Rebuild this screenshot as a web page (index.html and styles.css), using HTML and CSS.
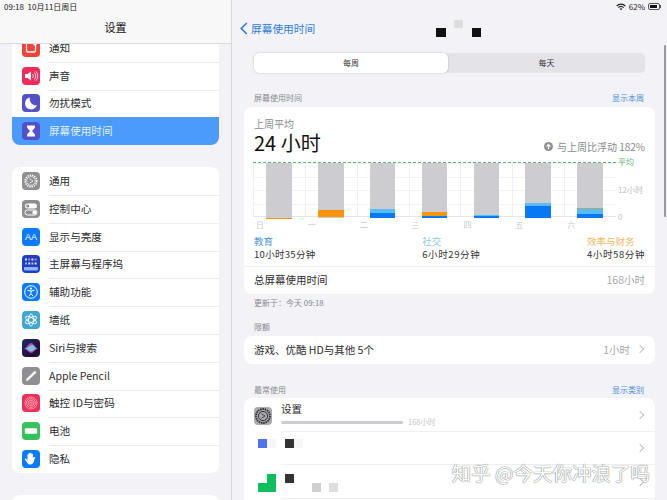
FILE: index.html
```html
<!doctype html>
<html lang="zh-CN">
  <head>
    <meta charset="UTF-8" />
    <meta name="viewport" content="width=device-width, initial-scale=1.0" />
    <title>屏幕使用时间</title>
    <link rel="stylesheet" href="styles.css">
  </head>
  <body>
    <aside class="sidebar">
      <header class="side-head">
        <div class="side-status">09:18&nbsp;&nbsp;10月11日周日</div>
        <div class="side-title">设置</div>
      </header>
      <div class="side-list">
        <div class="group group-first">
          <div class="row">
            <span class="icon red"><svg viewBox="0 0 18 18"><rect x="4.5" y="4" width="9" height="9" rx="1.5" fill="none" stroke="#fff" stroke-width="1.3"/><circle cx="13" cy="4.5" r="2" fill="#fff"/></svg></span>
            <span class="label">通知</span>
          </div>
          <div class="row">
            <span class="icon pink"><svg viewBox="0 0 18 18"><path d="M3 7h2.500L9 4.500v9L5.500 11H3z" fill="#fff"/><path d="M10.500 7a3 3 0 0 1 0 4M12.300 5.500a5 5 0 0 1 0 7M14 4.500a6.500 6.500 0 0 1 0 9" fill="none" stroke="#fff" stroke-width=".8"/></svg></span>
            <span class="label">声音</span>
          </div>
          <div class="row">
            <span class="icon indigo"><svg viewBox="0 0 18 18"><path d="M8 3.500a6 6 0 1 0 6.800 7.800A6.200 6.200 0 0 1 8 3.500z" fill="#fff"/></svg></span>
            <span class="label">勿扰模式</span>
          </div>
          <div class="row selected">
            <span class="icon indigo"><svg viewBox="0 0 18 18"><path d="M5 3.500h8v1.200c0 2-2.500 3-2.800 4.300.3 1.300 2.800 2.300 2.800 4.300v1.200H5v-1.200c0-2 2.500-3 2.800-4.300C7.500 7.700 5 6.700 5 4.700z" fill="#fff"/></svg></span>
            <span class="label">屏幕使用时间</span>
          </div>
        </div>
        <div class="group">
          <div class="row">
            <span class="icon gray"><svg viewBox="0 0 18 18"><circle cx="9" cy="9" r="5.800" fill="none" stroke="#fff" stroke-width="1.500" stroke-dasharray="1.400 .9"/><circle cx="9" cy="9" r="4.300" fill="none" stroke="#fff" stroke-width=".7"/><path d="M7.500 6.800 11 9l-3.500 2.200" fill="none" stroke="#fff" stroke-width=".7"/></svg></span>
            <span class="label">通用</span>
          </div>
          <div class="row">
            <span class="icon gray"><svg viewBox="0 0 18 18"><rect x="3" y="3.500" width="12" height="5" rx="2.500" fill="#fff"/><circle cx="5.700" cy="6" r="1.600" fill="#8e8e93"/><rect x="3" y="10" width="12" height="5" rx="2.500" fill="none" stroke="#fff"/><circle cx="12.300" cy="12.500" r="2" fill="#fff"/></svg></span>
            <span class="label">控制中心</span>
          </div>
          <div class="row">
            <span class="icon blue"><span class="aa">AA</span></span>
            <span class="label">显示与亮度</span>
          </div>
          <div class="row">
            <span class="icon navy"><svg viewBox="0 0 18 18" fill="#fff"><g opacity=".85"><rect x="3" y="3.500" width="2" height="2"/><rect x="6.200" y="3.500" width="2" height="2" fill="#f08ab0"/><rect x="9.400" y="3.500" width="2" height="2"/><rect x="12.600" y="3.500" width="2" height="2" fill="#f08ab0"/><rect x="3" y="7.500" width="2" height="2" fill="#8fd0f5"/><rect x="6.200" y="7.500" width="2" height="2"/><rect x="9.400" y="7.500" width="2" height="2" fill="#f5d98f"/><rect x="12.600" y="7.500" width="2" height="2"/></g><rect x="2" y="12" width="14" height="3.500" rx="1" fill="#8fb4f5"/></svg></span>
            <span class="label">主屏幕与程序坞</span>
          </div>
          <div class="row">
            <span class="icon blue"><svg viewBox="0 0 18 18"><circle cx="9" cy="9" r="6.300" fill="none" stroke="#fff" stroke-width="1"/><circle cx="9" cy="5.600" r="1.100" fill="#fff"/><path d="M5.500 7.300 9 8l3.500-.7M9 8v2.500M7 13.200l2-2.700 2 2.700" fill="none" stroke="#fff" stroke-width="1"/></svg></span>
            <span class="label">辅助功能</span>
          </div>
          <div class="row">
            <span class="icon teal"><svg viewBox="0 0 18 18" fill="none" stroke="#fff" stroke-width=".9"><ellipse cx="9" cy="9" rx="2.500" ry="6"/><ellipse cx="9" cy="9" rx="2.500" ry="6" transform="rotate(60 9 9)"/><ellipse cx="9" cy="9" rx="2.500" ry="6" transform="rotate(120 9 9)"/></svg></span>
            <span class="label">墙纸</span>
          </div>
          <div class="row">
            <span class="icon siri"><svg viewBox="0 0 18 18"><path d="M2 9.500C5 9 6.500 4 9 4s4 5 7 5.500C13 10.500 11 14 9 14s-4-3.500-7-4.500z" fill="#e25bd0" opacity=".75"/><path d="M4 9.500C6 8 8 6.500 10 6s3 3 4.500 3.500C12 11 10.500 12.500 9 12.500S6 11 4 9.500z" fill="#6fe0f2" opacity=".8"/></svg></span>
            <span class="label">Siri与搜索</span>
          </div>
          <div class="row">
            <span class="icon gray"><svg viewBox="0 0 18 18"><path d="M4 14l.5-2.200L12.800 3.700l1.700 1.700-8.300 8.100z" fill="#fff"/></svg></span>
            <span class="label">Apple Pencil</span>
          </div>
          <div class="row">
            <span class="icon rose"><svg viewBox="0 0 18 18" fill="none" stroke="#f7b4c2" stroke-width=".8"><circle cx="9" cy="9" r="6"/><circle cx="9" cy="9" r="4.400"/><circle cx="9" cy="9" r="2.800"/><circle cx="9" cy="9" r="1.200"/></svg></span>
            <span class="label">触控 ID与密码</span>
          </div>
          <div class="row">
            <span class="icon green"><svg viewBox="0 0 18 18"><rect x="2.800" y="6.300" width="12.400" height="5.400" rx="1" fill="#fff"/></svg></span>
            <span class="label">电池</span>
          </div>
          <div class="row">
            <span class="icon blue"><svg viewBox="0 0 18 18"><path d="M5.500 7.500V4.800c0-1 1.300-1 1.300 0V3.600c0-1 1.400-1 1.400 0v-.2c0-1 1.400-1 1.400 0v1c0-1 1.300-1 1.300 0v3.800c.3-1 1.900-1.600 2.400-.6-.8 1.200-1 2.300-1.400 3.900-.5 2-1.800 3-3.500 3-1.800 0-2.900-.9-3.600-2.600L3 9.800c-.5-1 .7-1.700 1.300-.8l1.200 1.500z" fill="#fff"/></svg></span>
            <span class="label">隐私</span>
          </div>
        </div>
        <div class="group">
          <div class="row">
            <span class="icon teal"></span>
            <span class="label"></span>
          </div>
        </div>
      </div>
    </aside>

    <main class="main">
      <div class="main-status">
        <svg class="wifi" viewBox="0 0 12 9"><path d="M6 8.500 4.300 6.700a2.500 2.500 0 0 1 3.400 0zM3.400 5.800 2.300 4.700a5.300 5.300 0 0 1 7.400 0L8.600 5.800a3.800 3.800 0 0 0-5.200 0zM1.400 3.800.3 2.700a8.100 8.100 0 0 1 11.400 0l-1.100 1.100a6.600 6.600 0 0 0-9.200 0z" fill="#222"/></svg>
        <span>62%</span>
        <span class="battery"><span class="battery-fill"></span></span>
      </div>
      <nav class="nav">
        <svg class="back" viewBox="0 0 8 13"><path d="M6.800 1 1.300 6.500l5.500 5.500" fill="none" stroke="#2f80d8" stroke-width="1.700"/></svg>
        <span>屏幕使用时间</span>
      </nav>

      <div class="segments">
        <div class="segment active">每周</div>
        <div class="segment">每天</div>
      </div>

      <div class="section-head first-head">
        <span>屏幕使用时间</span>
        <span class="link">显示本周</span>
      </div>
      <section class="card">
        <div class="summary">
          <div class="summary-label">上周平均</div>
          <div class="summary-line">
            <span class="big">24 小时</span>
            <span class="delta">
              <svg class="delta-icon" viewBox="0 0 10 10"><circle cx="5" cy="5" r="5" fill="#8e8e93"/><path d="M5 8V3M2.900 5 5 2.700 7.100 5" fill="none" stroke="#fff" stroke-width="1.300"/></svg>
              与上周比浮动 182%
            </span>
          </div>
        </div>
        <div class="chart-wrap">
          <div class="chart">
            <div class="col"><div class="bar"><i class="gray-seg" style="height:54.500px"></i><i class="orange" style="height:.5px"></i></div></div>
            <div class="col"><div class="bar"><i class="gray-seg" style="height:47px"></i><i class="orange" style="height:7px"></i><i class="gray-seg" style="height:1px"></i></div></div>
            <div class="col"><div class="bar"><i class="gray-seg" style="height:46px"></i><i class="sky" style="height:4px"></i><i class="blue-seg" style="height:5px"></i></div></div>
            <div class="col"><div class="bar"><i class="gray-seg" style="height:49px"></i><i class="orange" style="height:4px"></i><i class="blue-seg" style="height:2px"></i></div></div>
            <div class="col"><div class="bar"><i class="gray-seg" style="height:52px"></i><i class="sky" style="height:1px"></i><i class="blue-seg" style="height:2px"></i></div></div>
            <div class="col"><div class="bar"><i class="gray-seg" style="height:40px"></i><i class="sky" style="height:3px"></i><i class="blue-seg" style="height:12px"></i></div></div>
            <div class="col"><div class="bar"><i class="gray-seg" style="height:44.500px"></i><i class="olive" style="height:1px"></i><i class="sky" style="height:5.500px"></i><i class="blue-seg" style="height:4px"></i></div></div>
          </div>
          <div class="axis">
            <span class="axis-avg">平均</span>
            <span>12小时</span>
            <span>0</span>
          </div>
        </div>
        <div class="days">
          <span>日</span><span>一</span><span>二</span><span>三</span><span>四</span><span>五</span><span>六</span>
        </div>
        <div class="cats">
          <div>
            <div class="cat-name c-blue">教育</div>
            <div class="cat-value">10小时35分钟</div>
          </div>
          <div>
            <div class="cat-name c-sky">社交</div>
            <div class="cat-value wide">6小时29分钟</div>
          </div>
          <div>
            <div class="cat-name c-orange">效率与财务</div>
            <div class="cat-value wide">4小时58分钟</div>
          </div>
        </div>
        <div class="total">
          <span>总屏幕使用时间</span>
          <span class="muted">168小时</span>
        </div>
      </section>
      <div class="foot-note">更新于：今天 09:18</div>

      <div class="section-head limit-head"><span>限额</span></div>
      <section class="card limit">
        <span>游戏、优酷 HD与其他 5个</span>
        <span class="muted">1小时<i class="chev"></i></span>
      </section>

      <div class="section-head used-head">
        <span>最常使用</span>
        <span class="link">显示类别</span>
      </div>
      <section class="card apps">
        <div class="app">
          <span class="app-icon"><svg viewBox="0 0 18 18"><circle cx="9" cy="9" r="7" fill="none" stroke="#2c2c2e" stroke-width="1.800" stroke-dasharray="1.500 .8"/><circle cx="9" cy="9" r="4.600" fill="none" stroke="#2c2c2e" stroke-width="1"/><path d="M7.500 6.800 11 9l-3.500 2.200" fill="none" stroke="#2c2c2e" stroke-width=".8"/></svg></span>
          <div class="app-body">
            <div class="app-name">设置</div>
            <div class="app-usage"><span class="usage-bar"></span><span class="usage-text">168小时</span></div>
          </div>
          <i class="chev"></i>
        </div>
        <div class="app">
          <span class="app-icon"></span>
          <div class="app-body"></div>
          <i class="chev"></i>
          <b class="px px-blue"></b><b class="px px-faint1"></b><b class="px px-dark1"></b><b class="px px-faint2"></b>
        </div>
        <div class="app">
          <span class="app-icon"></span>
          <div class="app-body"></div>
          <i class="chev"></i>
          <b class="px px-green1"></b><b class="px px-green2"></b><b class="px px-dark2"></b><b class="px px-g1"></b><b class="px px-g2"></b>
        </div>
      </section>

      <b class="px top-a"></b><b class="px top-b"></b><b class="px top-c"></b>
      <div class="scrollbar"></div>
      <div class="watermark">知乎 @今天你冲浪了吗</div>
    </main>
  </body>
</html>
```

FILE: styles.css
```css
* {
  box-sizing: border-box;
}
body {
  margin: 0;
  width: 667px;
  height: 500px;
  overflow: hidden;
  display: flex;
  background: #f2f2f7;
  color: #1c1c1e;
  font-family: "Noto Sans CJK SC", "Liberation Sans", sans-serif;
}

/* left column */
.sidebar {
  width: 232px;
  height: 500px;
  display: flex;
  flex-direction: column;
  border-right: 1px solid #d8d8dc;
  background: #f2f2f7;
}
.side-head {
  height: 44px;
  flex: none;
  background: #f8f8f9;
  border-bottom: 1px solid #dcdcdf;
}
.side-status {
  height: 13px;
  padding-left: 4px;
  font-size: 8px;
  line-height: 13px;
  color: #222;
}
.side-title {
  height: 30px;
  text-align: center;
  font-size: 11px;
  line-height: 28px;
  color: #111;
}
.side-list {
  flex: 1;
  overflow: hidden;
  padding: 0 12px;
}
.group {
  background: #fff;
  border-radius: 8px;
  overflow: hidden;
  margin-bottom: 22px;
}
.group-first {
  margin-top: -10px;
}
.row {
  height: 27.800px;
  display: flex;
  align-items: center;
  padding-left: 10px;
}
.label {
  flex: 1;
  align-self: stretch;
  display: flex;
  align-items: center;
  margin-left: 9px;
  padding-bottom: 2px;
  font-size: 10.600px;
  color: #2c2c2e;
}
.group-first .row:first-child .label {
  padding-bottom: 0;
}
.row + .row .label {
  border-top: 1px solid #ececef;
}
.row.selected {
  background: #4a9bfb;
}
.row.selected .label {
  color: #e4f0ff;
  border-top: none;
}
.icon {
  width: 18px;
  height: 18px;
  flex: none;
  border-radius: 4px;
  display: flex;
  align-items: center;
  justify-content: center;
  overflow: hidden;
}
.icon svg {
  width: 18px;
  height: 18px;
}
.red { background: #f0443a; }
.pink { background: #ee2c5c; }
.indigo { background: #5350c8; }
.gray { background: #8e8e93; }
.blue { background: #0a7aff; }
.navy { background: #1c3fc4; }
.teal { background: #40a8d0; }
.siri { background: linear-gradient(135deg, #1b2a6b, #241038 70%, #0e1a40); }
.rose { background: #ee3058; }
.green { background: #36c15a; }
.aa {
  font-size: 9px;
  color: #fff;
  font-family: "Liberation Sans", sans-serif;
}

/* right column */
.main {
  position: relative;
  width: 435px;
  height: 500px;
  overflow: hidden;
  padding: 0 12px;
}
.main-status {
  height: 13px;
  display: flex;
  align-items: center;
  justify-content: flex-end;
  gap: 3px;
  margin-right: -7px;
  font-size: 8px;
  color: #222;
}
.wifi {
  width: 10px;
  height: 8px;
}
.battery {
  position: relative;
  width: 12px;
  height: 7px;
  margin-right: 2px;
  padding: 1px;
  border: 1px solid #555;
  border-radius: 2px;
}
.battery::after {
  content: "";
  position: absolute;
  left: 11px;
  top: 1px;
  width: 1px;
  height: 3px;
  background: #555;
}
.battery-fill {
  display: block;
  width: 7px;
  height: 100%;
  background: #111;
}
.nav {
  height: 30px;
  display: flex;
  align-items: center;
  gap: 3px;
  margin-left: -4px;
  font-size: 10.700px;
  color: #2f80d8;
}
.back {
  width: 8px;
  height: 13px;
}
.segments {
  height: 20px;
  margin: 10px 10px 0;
  display: flex;
  border-radius: 5px;
  background: #e4e4e8;
}
.segment {
  flex: 1;
  text-align: center;
  font-size: 8px;
  line-height: 20px;
  color: #333;
}
.segment.active {
  flex: none;
  width: 194px;
  background: #fff;
  border-radius: 5px;
  box-shadow: 0 0 2px rgba(0, 0, 0, 0.25);
}
.section-head {
  height: 12px;
  display: flex;
  justify-content: space-between;
  padding: 0 11px 0 10px;
  font-size: 8px;
  line-height: 12px;
  color: #8a8a8e;
}
.first-head { margin-top: 19px; }
.limit-head { margin-top: 12px; }
.used-head { margin-top: 20px; }
.link {
  color: #4a8fd0;
}
.card {
  background: #fff;
  border-radius: 8px;
  margin-top: 3px;
}
.summary {
  padding: 10px 10px 0;
}
.summary-label {
  height: 14px;
  font-size: 10px;
  line-height: 14px;
  color: #8a8a8e;
}
.summary-line {
  height: 26px;
  display: flex;
  align-items: center;
  justify-content: space-between;
}
.big {
  margin-bottom: 2px;
  font-size: 20px;
  line-height: 22px;
  color: #111;
}
.delta {
  display: flex;
  align-items: center;
  gap: 4px;
  margin-top: 5px;
  font-size: 10px;
  line-height: 14px;
  color: #8a8a8e;
}
.delta-icon {
  width: 9px;
  height: 9px;
}
.chart-wrap {
  display: flex;
  margin: 5px 0 0 9px;
}
.chart {
  width: 363px;
  height: 55px;
  display: grid;
  grid-template-columns: repeat(7, 1fr);
  border-top: 1px dashed #5fb56f;
  border-bottom: 1px solid #e6e6ea;
  background-image:
    repeating-linear-gradient(to right, #eff1f6 0, #eff1f6 1px, transparent 1px, transparent 25.930px),
    repeating-linear-gradient(to bottom, #eff1f6 0, #eff1f6 1px, transparent 1px, transparent 13.500px);
}
.col {
  display: flex;
  justify-content: center;
}
.bar {
  width: 25.500px;
  display: flex;
  flex-direction: column;
}
.bar i {
  display: block;
  flex: none;
}
.gray-seg { background: #cdcdd1; }
.orange { background: #f9950c; }
.sky { background: #56bcfa; }
.blue-seg { background: #0a78f5; }
.olive { background: #a8a878; }
.axis {
  height: 65px;
  margin: -5px 0 -5px 2px;
  display: flex;
  flex-direction: column;
  justify-content: space-between;
  font-size: 8px;
  line-height: 10px;
  color: #c0c0c4;
}
.axis-avg {
  color: #62b873;
}
.days {
  width: 363px;
  height: 16px;
  margin-left: 9px;
  display: grid;
  grid-template-columns: repeat(7, 1fr);
  padding-left: 0;
  font-size: 8px;
  line-height: 15px;
  color: #c9c9cd;
}
.days span {
  padding-left: 3px;
}
.cats {
  height: 31px;
  margin-top: 2px;
  padding: 0 10px;
  display: flex;
  justify-content: space-between;
}
.cat-name {
  height: 13px;
  font-size: 9.500px;
  line-height: 13px;
}
.c-blue { color: #4a94d8; }
.c-sky { color: #8fcbe6; }
.c-orange { color: #edb765; }
.cat-value {
  font-size: 9.500px;
  line-height: 13px;
  letter-spacing: 0.3px;
  color: #333;
}
.cat-value.wide {
  letter-spacing: 0.6px;
}
.total {
  height: 28px;
  margin-left: 0;
  padding: 0 10px 2px;
  display: flex;
  align-items: center;
  justify-content: space-between;
  border-top: 1px solid #efeff2;
  font-size: 10.500px;
  color: #2c2c2e;
}
.muted {
  color: #a8a8ad;
}
.foot-note {
  height: 12px;
  margin-top: 3px;
  padding-left: 10px;
  font-size: 8px;
  line-height: 12px;
  color: #8a8a8e;
}
.limit {
  height: 28px;
  padding: 0 10px 2px;
  display: flex;
  align-items: center;
  justify-content: space-between;
  font-size: 10.500px;
  color: #2c2c2e;
}
.limit .muted {
  display: flex;
  align-items: center;
  gap: 7px;
}
.chev {
  width: 6px;
  height: 6px;
  margin-right: 2px;
  border-top: 1px solid #c0c0c5;
  border-right: 1px solid #c0c0c5;
  transform: rotate(45deg);
}
.apps {
  margin-top: 2px;
  height: 110px;
}
.app {
  position: relative;
  height: 33.500px;
  display: flex;
  align-items: center;
  padding: 0 10px;
}
.app-icon {
  width: 18px;
  height: 18px;
  flex: none;
  border-radius: 4px;
}
.app:first-child .app-icon {
  margin-top: 3px;
  background: #a9a9ae;
}
.app-icon svg {
  display: block;
  width: 18px;
  height: 18px;
}
.app-body {
  flex: 1;
  align-self: stretch;
  margin-left: 9px;
  margin-right: 10px;
}
.app .chev {
  flex: none;
}
.app::after {
  content: "";
  position: absolute;
  left: 37px;
  right: 0;
  bottom: 0;
  height: 1px;
  background: #eeeef1;
}
.app-name {
  height: 19px;
  font-size: 10.500px;
  line-height: 21px;
  color: #2c2c2e;
}
.app-usage {
  display: flex;
  align-items: center;
  gap: 5px;
}
.usage-bar {
  width: 122px;
  height: 3px;
  border-radius: 2px;
  background: #cdcdd1;
}
.usage-text {
  font-size: 7.500px;
  line-height: 10px;
  color: #c4c4c8;
}

/* mosaic blocks laid over the blurred-out content */
.px {
  position: absolute;
  display: block;
}
.top-a { left: 204px; top: 28px; width: 10px; height: 9px; background: #111; }
.top-b { left: 222px; top: 20px; width: 9px; height: 8px; background: #dcdcdf; }
.top-c { left: 240px; top: 28px; width: 9px; height: 9px; background: #111; }
.px-blue { left: 14px; top: 7px; width: 9px; height: 9px; background: #5073f0; }
.px-faint1 { left: 23px; top: 7px; width: 9px; height: 9px; background: #f7f7f8; }
.px-dark1 { left: 41px; top: 7px; width: 9px; height: 9px; background: #333; }
.px-faint2 { left: 50px; top: 7px; width: 9px; height: 9px; background: #f7f7f8; }
.px-green1 { left: 23px; top: 9px; width: 9px; height: 9px; background: #0fbf5f; }
.px-green2 { left: 14px; top: 18px; width: 18px; height: 9px; background: #0fbf5f; }
.px-dark2 { left: 41px; top: 9px; width: 9px; height: 9px; background: #333; }
.px-g1 { left: 68px; top: 18px; width: 9px; height: 9px; background: #cfcfd2; }
.px-g2 { left: 85px; top: 18px; width: 9px; height: 9px; background: #dedee1; }
.scrollbar {
  position: absolute;
  left: 432px;
  top: 45px;
  width: 2px;
  height: 172px;
  border-radius: 1px;
  background: #98989c;
}
.watermark {
  position: absolute;
  right: 17px;
  top: 458px;
  font-size: 19.500px;
  line-height: 30px;
  white-space: nowrap;
  color: #fff;
  text-shadow:
    0 0 1px #777,
    0 0 1px #777;
}
```
